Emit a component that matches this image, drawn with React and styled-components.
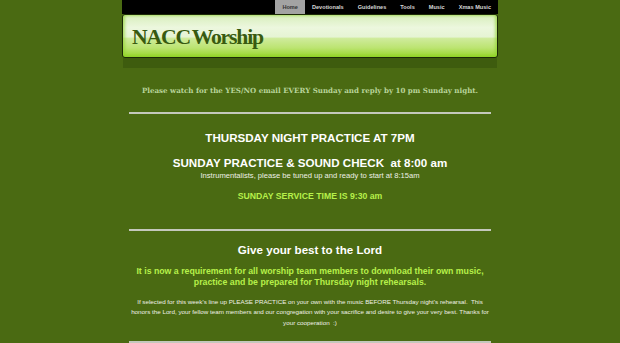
import React from "react";
import styled, { createGlobalStyle } from "styled-components";

const GlobalStyle = createGlobalStyle`
  html, body {
    margin: 0;
    padding: 0;
    background: #4a6a12;
  }
`;

// LAYOUT
const Page = styled.div`
  width: 376px;
  margin: 0 auto;
`;

const NavBar = styled.ul`
  display: flex;
  justify-content: flex-end;
  height: 14px;
  margin: 0;
  padding: 0;
  list-style: none;
  background: #000;
`;

const NavItem = styled.li`
  display: flex;
  align-items: center;
  padding: 0 7px;
  background: ${props => (props.active ? "#a3a3a3" : "transparent")};
  color: ${props => (props.active ? "#333" : "#d8d8d8")};
  font-family: "Liberation Sans", Arial, sans-serif;
  font-size: 5.6px;
  font-weight: bold;
  white-space: nowrap;
`;

const Header = styled.div`
  display: flex;
  align-items: center;
  height: 44px;
  border: 1px solid #1c2a06;
  border-radius: 3px;
  box-sizing: border-box;
  padding: 3px 0 0 9px;
  background: linear-gradient(
    to bottom,
    #d8eebc 0%,
    #ecf7de 30%,
    #e6f4d4 52%,
    #cfeb9c 56%,
    #bce472 78%,
    #96d62a 100%
  );
  box-shadow: inset 2px 0 3px rgba(140, 210, 40, 0.6),
    inset -2px 0 3px rgba(140, 210, 40, 0.6);
`;

const Title = styled.h1`
  margin: 0;
  font-family: "Liberation Serif", "Times New Roman", serif;
  font-size: 21.7px;
  font-weight: bold;
  letter-spacing: -1.2px;
  word-spacing: -2px;
  color: #385a10;
`;

const Shadow = styled.div`
  height: 10px;
  background: #3e5c0e;
  margin: 0 1px;
`;

const Content = styled.div`
  padding: 0 7px;
`;

const Notice = styled.p`
  margin: 18px 0 0;
  text-align: center;
  font-family: "DejaVu Serif", Georgia, serif;
  font-size: 7.1px;
  font-weight: bold;
  color: #b9d49a;
`;

const Rule = styled.hr`
  margin: ${props => props.m || "16px 0 0"};
  border: none;
  height: 2px;
  background: #c4c8bc;
`;

const Heading = styled.p`
  margin: ${props => props.m || "0"};
  text-align: center;
  font-family: "Liberation Sans", Arial, sans-serif;
  font-size: ${props => props.size || "11.6px"};
  font-weight: bold;
  line-height: ${props => props.lh || "1.2"};
  color: ${props => props.color || "#ffffff"};
`;

const Small = styled.p`
  margin: ${props => props.m || "0"};
  text-align: center;
  font-family: "Liberation Sans", Arial, sans-serif;
  font-size: ${props => props.size || "6.25px"};
  line-height: ${props => props.lh || "1.2"};
  color: #eef0e6;
`;

const NAV = ["Home", "Devotionals", "Guidelines", "Tools", "Music", "Xmas Music"];

export default function App() {
  return (
    <Page>
      <GlobalStyle />
      <NavBar>
        {NAV.map((item, i) => (
          <NavItem key={item} active={i === 0}>
            {item}
          </NavItem>
        ))}
      </NavBar>
      <Header>
        <Title>NACC Worship</Title>
      </Header>
      <Shadow />
      <Content>
        <Notice>
          Please watch for the YES/NO email EVERY Sunday and reply by 10 pm Sunday night.
        </Notice>
        <Rule m="17px 0 0" />
        <Heading m="17px 0 0">THURSDAY NIGHT PRACTICE AT 7PM</Heading>
        <Heading m="11px 0 0">SUNDAY PRACTICE &amp; SOUND CHECK&nbsp; at 8:00 am</Heading>
        <Small m="1px 0 0" size="7.6px">
          Instrumentalists, please be tuned up and ready to start at 8:15am
        </Small>
        <Heading m="11px 0 0" size="8.7px" color="#b6f04a">
          SUNDAY SERVICE TIME IS 9:30 am
        </Heading>
        <Rule m="28px 0 0" />
        <Heading m="12px 0 0">Give your best to the Lord</Heading>
        <Heading m="9px 0 0" size="8.75px" lh="1.24" color="#b6f04a">
          It is now a requirement for all worship team members to download their own music,
          practice and be prepared for Thursday night rehearsals.
        </Heading>
        <Small m="9px 0 0" lh="1.66">
          If selected for this week's line up PLEASE PRACTICE on your own with the music BEFORE
          Thursday night's rehearsal.&nbsp; This honors the Lord, your fellow team members and our
          congregation with your sacrifice and desire to give your very best. Thanks for your
          cooperation&nbsp; :)
        </Small>
        <Rule m="13px 0 0" />
      </Content>
    </Page>
  );
}
